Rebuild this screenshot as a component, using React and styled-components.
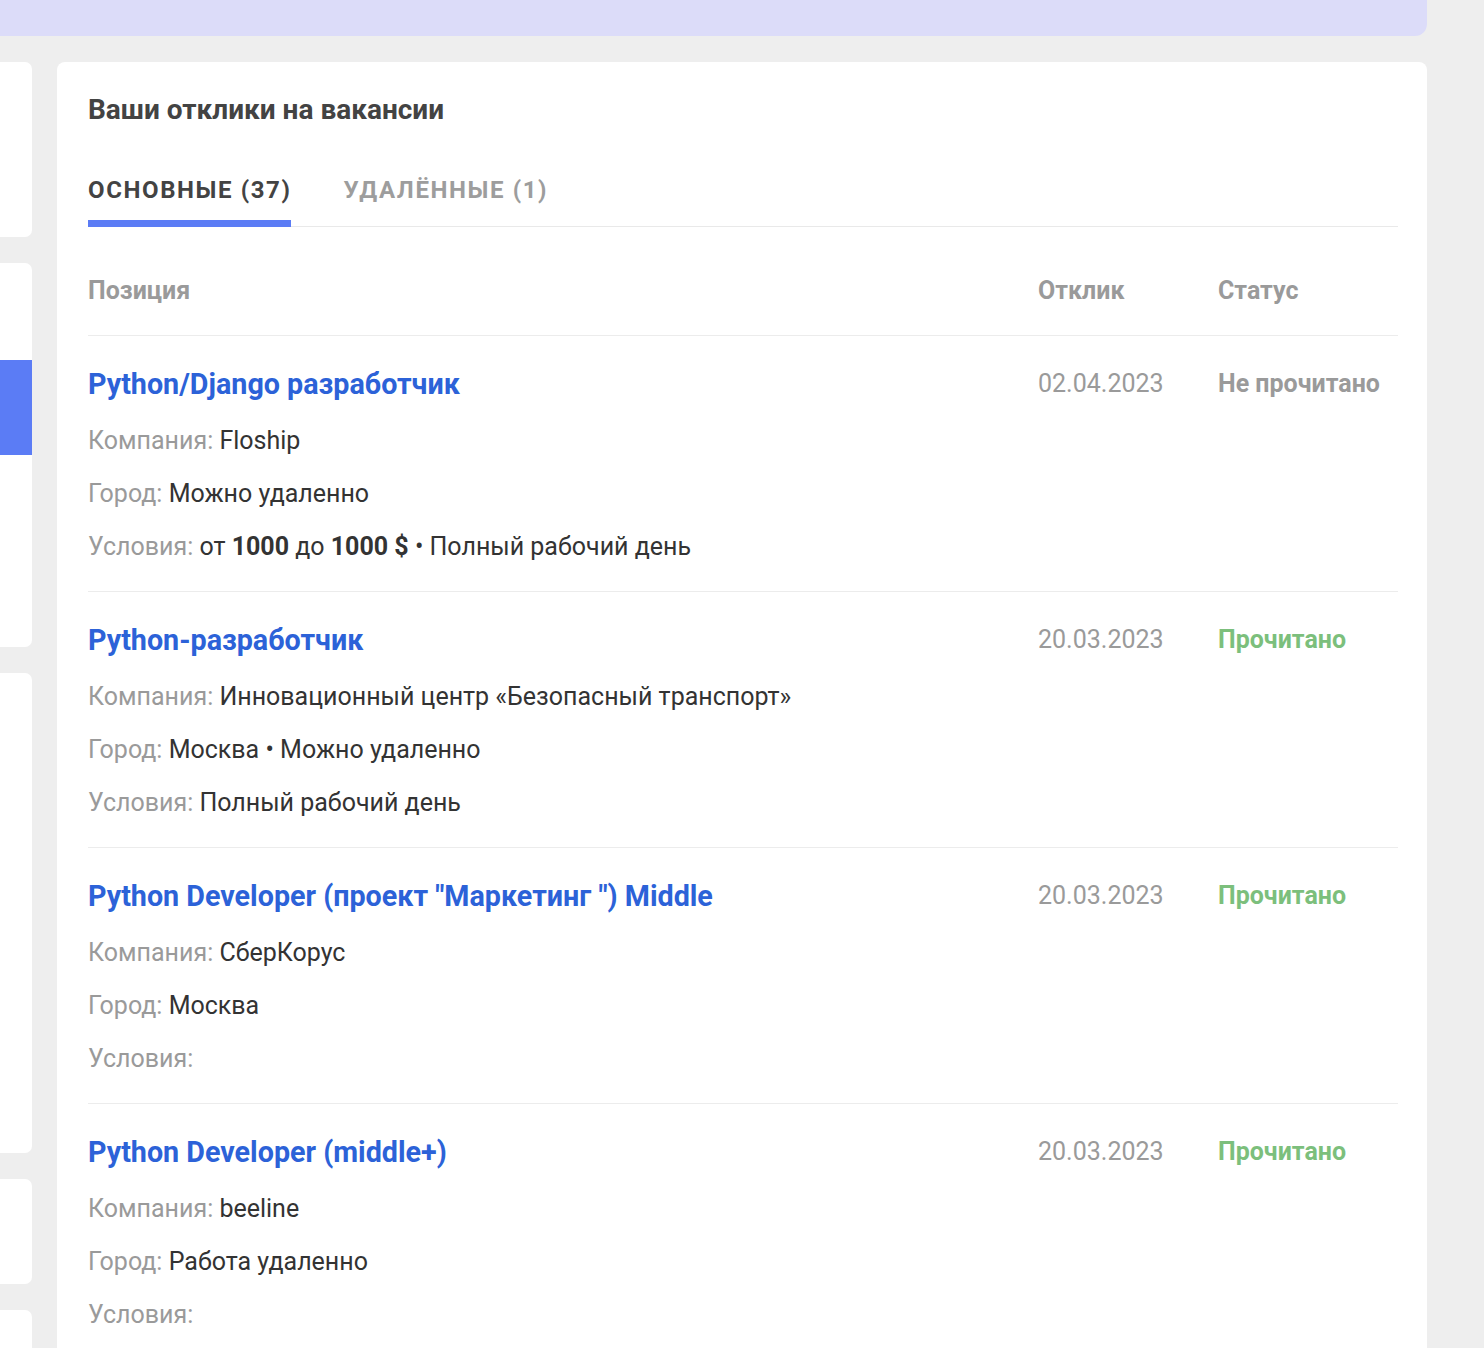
import React from "react";
import styled, { createGlobalStyle } from "styled-components";

const GlobalStyles = createGlobalStyle`
  html, body {
    margin: 0;
    padding: 0;
    background: #eeeeee;
    font-family: Roboto, "Noto Sans", "Liberation Sans", sans-serif;
    overflow: hidden;
  }
`;

const Page = styled.div`
  width: 1484px;
  height: 1348px;
  overflow: hidden;
`;

const Banner = styled.div`
  width: 1427px;
  height: 36px;
  background: #dcdcf9;
  border-bottom-right-radius: 12px;
`;

const Layout = styled.div`
  display: grid;
  grid-template-columns: 32px 1370px;
  column-gap: 25px;
  margin-top: 26px;
  align-items: start;
`;

const SideColumn = styled.div`
  display: flex;
  flex-direction: column;
  gap: 26px;
`;

const SideCard = styled.div`
  height: ${(p) => p.h}px;
  background: #ffffff;
  border-radius: 0 7px 7px 0;
  overflow: hidden;
  display: flex;
  flex-direction: column;
`;

const SideAccent = styled.div`
  margin-top: ${(p) => p.top}px;
  height: ${(p) => p.h}px;
  background: #5b7cf5;
`;

const Main = styled.div`
  background: #ffffff;
  border-radius: 8px 8px 0 0;
  padding: 28px 29px 0 31px;
  min-height: 1300px;
`;

const Heading = styled.h1`
  margin: 0;
  font-size: 28px;
  line-height: 40px;
  font-weight: 700;
  color: #434343;
`;

const TabList = styled.div`
  display: flex;
  gap: 52px;
  margin-top: 45px;
  border-bottom: 1px solid #e9e9e9;
`;

const Tab = styled.div`
  font-size: 24px;
  line-height: 30px;
  font-weight: 700;
  letter-spacing: 1.6px;
  text-transform: uppercase;
  color: ${(p) => (p.active ? "#434343" : "#9d9d9d")};
  padding-bottom: 15px;
  margin-bottom: -1px;
  border-bottom: 7px solid ${(p) => (p.active ? "#5b7cf5" : "transparent")};
`;

const Row = styled.div`
  display: grid;
  grid-template-columns: 1fr 180px 180px;
  align-items: start;
  border-bottom: 1px solid #ececec;
`;

const HeadRow = styled(Row)`
  padding: 46px 0 26px;
`;

const HeadCell = styled.div`
  font-size: 25px;
  line-height: 36px;
  font-weight: 700;
  color: #9a9a9a;
`;

const ItemRow = styled(Row)`
  padding: 30px 0 26px;
`;

const VacancyTitle = styled.a`
  display: block;
  font-size: 28.7px;
  line-height: 36px;
  font-weight: 700;
  color: #2c62d8;
  text-decoration: none;
  padding-bottom: 4px;
`;

const Detail = styled.div`
  font-size: 25px;
  line-height: 36px;
  color: #333333;
  margin-top: 17px;
`;

const Label = styled.span`
  color: #9a9a9a;
`;

const Strong = styled.b`
  font-weight: 700;
`;

const DateCell = styled.div`
  font-size: 25px;
  line-height: 36px;
  color: #9a9a9a;
`;

const Status = styled.div`
  font-size: 25px;
  line-height: 36px;
  font-weight: 700;
  color: ${(p) => (p.read ? "#7cbf7c" : "#9a9a9a")};
`;

const responses = [
  {
    title: "Python/Django разработчик",
    company: "Floship",
    city: "Можно удаленно",
    terms: (
      <>
        от <Strong>1000</Strong> до <Strong>1000 $</Strong> • Полный рабочий день
      </>
    ),
    date: "02.04.2023",
    read: false,
  },
  {
    title: "Python-разработчик",
    company: "Инновационный центр «Безопасный транспорт»",
    city: "Москва • Можно удаленно",
    terms: "Полный рабочий день",
    date: "20.03.2023",
    read: true,
  },
  {
    title: 'Python Developer (проект "Маркетинг ") Middle',
    company: "СберКорус",
    city: "Москва",
    terms: "",
    date: "20.03.2023",
    read: true,
  },
  {
    title: "Python Developer (middle+)",
    company: "beeline",
    city: "Работа удаленно",
    terms: "",
    date: "20.03.2023",
    read: true,
  },
];

const App = () => {
  return (
    <Page>
      <GlobalStyles />
      <Banner />
      <Layout>
        <SideColumn>
          <SideCard h={175} />
          <SideCard h={384}>
            <SideAccent top={97} h={95} />
          </SideCard>
          <SideCard h={480} />
          <SideCard h={105} />
          <SideCard h={200} />
        </SideColumn>
        <Main>
          <Heading>Ваши отклики на вакансии</Heading>
          <TabList>
            <Tab active>Основные (37)</Tab>
            <Tab>Удалённые (1)</Tab>
          </TabList>
          <HeadRow>
            <HeadCell>Позиция</HeadCell>
            <HeadCell>Отклик</HeadCell>
            <HeadCell>Статус</HeadCell>
          </HeadRow>
          {responses.map((r) => (
            <ItemRow key={r.title}>
              <div>
                <VacancyTitle href="#">{r.title}</VacancyTitle>
                <Detail>
                  <Label>Компания:</Label> {r.company}
                </Detail>
                <Detail>
                  <Label>Город:</Label> {r.city}
                </Detail>
                <Detail>
                  <Label>Условия:</Label> {r.terms}
                </Detail>
              </div>
              <DateCell>{r.date}</DateCell>
              <Status read={r.read}>{r.read ? "Прочитано" : "Не прочитано"}</Status>
            </ItemRow>
          ))}
        </Main>
      </Layout>
    </Page>
  );
};

export default App;
